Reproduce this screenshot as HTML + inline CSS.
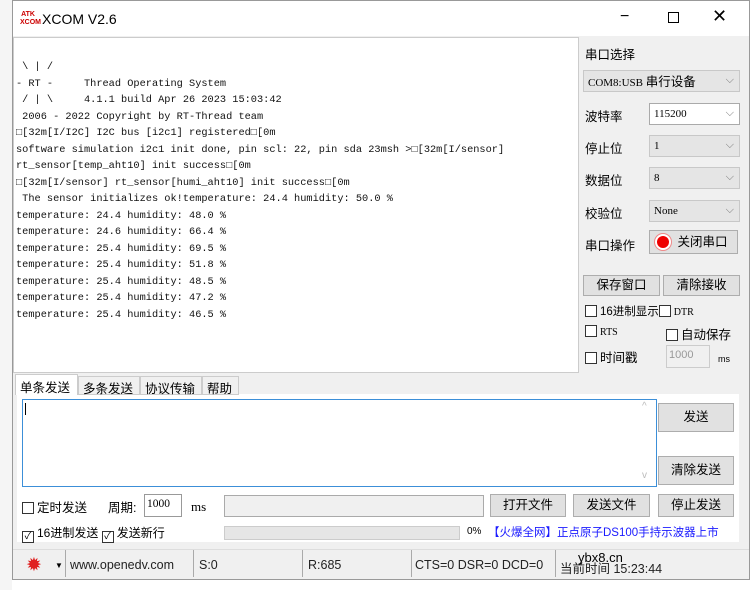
<!DOCTYPE html>
<html><head><meta charset="utf-8"><style>
*{margin:0;padding:0;box-sizing:border-box}
body{width:753px;height:590px;background:#fff;position:relative;overflow:hidden;font-family:"Liberation Sans","Noto Sans CJK SC",sans-serif;font-size:12px;color:#000}
.a{position:absolute}
.win{left:12px;top:0;width:738px;height:580px;background:#f0f0f0;border:1px solid #999}
.log{font-family:"Liberation Mono","Noto Sans CJK SC",monospace;font-size:10.3px;line-height:16.5px;white-space:pre;color:#111}
.cb{display:inline-block;width:12px;height:12px;border:1px solid #333;background:#fff;vertical-align:-2px;margin-right:3px}
.btn{position:absolute;background:#e1e1e1;border:1px solid #adadad;text-align:center;font-size:12.5px}
.combo{position:absolute;background:#e5e5e5;border:1px solid #c8c8c8;font-size:11px;padding-left:4px;line-height:20px;font-family:"Liberation Serif","Noto Sans CJK SC",serif}
.combo:after{content:"⌵";position:absolute;right:5px;top:-1px;color:#777;font-size:11px}
.lbl{position:absolute;font-size:12.5px}
</style></head><body>
<div class="a" style="left:0;top:0;width:12px;height:590px;background:#f5f5f5"></div>
<div class="a win"></div>
<div class="a" style="left:13px;top:1px;width:736px;height:35px;background:#fff"></div>
<div class="a" style="left:20px;top:11px;width:16px;height:16px;font-size:7px;line-height:8px;color:#c00;font-weight:bold;text-align:center">ATK<br>XCOM</div>
<div class="a" style="left:42px;top:11px;font-size:14px">XCOM V2.6</div>
<div class="a" style="left:620px;top:8px;font-size:16px">−</div>
<div class="a" style="left:668px;top:12px;width:11px;height:11px;border:1px solid #000"></div>
<div class="a" style="left:712px;top:6px;font-size:18px">✕</div>
<div class="a" style="left:13px;top:37px;width:566px;height:336px;background:#fff;border:1px solid #ccc"></div>
<div class="a log" style="left:16px;top:59px"> \ | /
- RT -     Thread Operating System
 / | \     4.1.1 build Apr 26 2023 15:03:42
 2006 - 2022 Copyright by RT-Thread team
□[32m[I/I2C] I2C bus [i2c1] registered□[0m
software simulation i2c1 init done, pin scl: 22, pin sda 23msh >□[32m[I/sensor]
rt_sensor[temp_aht10] init success□[0m
□[32m[I/sensor] rt_sensor[humi_aht10] init success□[0m
 The sensor initializes ok!temperature: 24.4 humidity: 50.0 %
temperature: 24.4 humidity: 48.0 %
temperature: 24.6 humidity: 66.4 %
temperature: 25.4 humidity: 69.5 %
temperature: 25.4 humidity: 51.8 %
temperature: 25.4 humidity: 48.5 %
temperature: 25.4 humidity: 47.2 %
temperature: 25.4 humidity: 46.5 %</div>
<div class="lbl" style="left:585px;top:44px">串口选择</div>
<div class="combo" style="left:583px;top:70px;width:157px;height:22px">COM8:USB <span style="font-family:'Noto Sans CJK SC';font-size:12.5px">串行设备</span></div>
<div class="lbl" style="left:585px;top:106px">波特率</div>
<div class="combo" style="left:649px;top:103px;width:91px;height:22px;background:#fff;border-color:#aaa">115200</div>
<div class="lbl" style="left:585px;top:138px">停止位</div>
<div class="combo" style="left:649px;top:135px;width:91px;height:22px">1</div>
<div class="lbl" style="left:585px;top:170px">数据位</div>
<div class="combo" style="left:649px;top:167px;width:91px;height:22px">8</div>
<div class="lbl" style="left:585px;top:203px">校验位</div>
<div class="combo" style="left:649px;top:200px;width:91px;height:22px">None</div>
<div class="lbl" style="left:585px;top:235px">串口操作</div>
<div class="btn" style="left:649px;top:230px;width:89px;height:24px;line-height:22px;padding-left:18px">关闭串口</div>
<div class="a" style="left:657px;top:236px;width:12px;height:12px;border-radius:50%;background:#e00;box-shadow:0 0 0 2px #fff,0 0 0 3px #e88"></div>
<div class="btn" style="left:583px;top:275px;width:77px;height:21px;line-height:19px">保存窗口</div>
<div class="btn" style="left:663px;top:275px;width:77px;height:21px;line-height:19px">清除接收</div>
<div class="lbl" style="left:585px;top:303px;font-size:11.5px"><span class="cb"></span>16进制显示<span class="cb"></span><span style="font-family:'Liberation Serif';font-size:10px">DTR</span></div>
<div class="lbl" style="left:585px;top:325px;font-size:10px;font-family:'Liberation Serif'"><span class="cb"></span>RTS</div>
<div class="lbl" style="left:666px;top:324px"><span class="cb"></span>自动保存</div>
<div class="lbl" style="left:585px;top:347px"><span class="cb"></span>时间戳</div>
<div class="a" style="left:666px;top:345px;width:44px;height:23px;background:#f0f0f0;border:1px solid #ccc;color:#999;font-size:11px;padding:3px 2px">1000</div>
<div class="a" style="left:718px;top:354px;font-size:9px">ms</div>
<div class="a" style="left:17px;top:394px;width:722px;height:148px;background:#fff"></div>
<div class="a" style="left:15px;top:374px;width:63px;height:21px;background:#fff;border:1px solid #ccc;border-bottom:none;padding:2px 4px;font-size:12.5px">单条发送</div>
<div class="a" style="left:78px;top:376px;width:62px;height:19px;border:1px solid #ccc;padding:1px 4px;font-size:12.5px;background:#f0f0f0">多条发送</div>
<div class="a" style="left:140px;top:376px;width:62px;height:19px;border:1px solid #ccc;padding:1px 4px;font-size:12.5px;background:#f0f0f0">协议传输</div>
<div class="a" style="left:202px;top:376px;width:37px;height:19px;border:1px solid #ccc;padding:1px 4px;font-size:12.5px;background:#f0f0f0">帮助</div>
<div class="a" style="left:22px;top:399px;width:635px;height:88px;background:#fff;border:1px solid #3c8fd8"></div>
<div class="a" style="left:25px;top:403px;width:1px;height:12px;background:#000"></div>
<div class="a" style="left:642px;top:401px;color:#bbb;font-size:10px">^</div>
<div class="a" style="left:642px;top:470px;color:#bbb;font-size:10px">v</div>
<div class="btn" style="left:658px;top:403px;width:76px;height:29px;line-height:27px">发送</div>
<div class="btn" style="left:658px;top:456px;width:76px;height:29px;line-height:27px">清除发送</div>
<div class="lbl" style="left:22px;top:497px"><span class="cb"></span>定时发送</div>
<div class="lbl" style="left:108px;top:497px">周期:</div>
<div class="a" style="left:144px;top:494px;width:38px;height:23px;background:#fff;border:1px solid #999;font-family:'Liberation Serif';font-size:11.5px;padding:3px 2px">1000</div>
<div class="a" style="left:191px;top:499px;font-family:'Liberation Serif';font-size:13px">ms</div>
<div class="a" style="left:224px;top:495px;width:260px;height:22px;background:#f0f0f0;border:1px solid #aaa"></div>
<div class="btn" style="left:490px;top:494px;width:76px;height:23px;line-height:21px">打开文件</div>
<div class="btn" style="left:573px;top:494px;width:77px;height:23px;line-height:21px">发送文件</div>
<div class="btn" style="left:658px;top:494px;width:76px;height:23px;line-height:21px">停止发送</div>
<div class="lbl" style="left:22px;top:524px;font-size:12px"><span class="cb" style="text-align:center;font-size:10px;line-height:10px">✓</span>16进制发送 <span class="cb" style="text-align:center;font-size:10px;line-height:10px">✓</span>发送新行</div>
<div class="a" style="left:224px;top:526px;width:236px;height:14px;background:#e6e6e6;border:1px solid #ccc"></div>
<div class="a" style="left:467px;top:526px;font-size:10px">0%</div>
<div class="a" style="left:488px;top:524px;font-size:11.5px;color:#1a1aff;white-space:nowrap">【火爆全网】正点原子DS100手持示波器上市</div>
<div class="a" style="left:13px;top:549px;width:736px;height:30px;background:#f0f0f0;border-top:1px solid #ddd"></div>
<div class="a" style="left:26px;top:554px;color:#e02020;font-size:19px">✹</div>
<div class="a" style="left:55px;top:561px;font-size:8px">▼</div>
<div class="a" style="left:65px;top:550px;width:1px;height:27px;background:#aaa"></div>
<div class="a" style="left:70px;top:558px;font-size:12.5px;color:#222">www.openedv.com</div>
<div class="a" style="left:193px;top:550px;width:1px;height:27px;background:#aaa"></div>
<div class="a" style="left:199px;top:558px;font-size:12.5px;color:#222">S:0</div>
<div class="a" style="left:302px;top:550px;width:1px;height:27px;background:#aaa"></div>
<div class="a" style="left:308px;top:558px;font-size:12.5px;color:#222">R:685</div>
<div class="a" style="left:411px;top:550px;width:1px;height:27px;background:#aaa"></div>
<div class="a" style="left:415px;top:558px;font-size:12.5px;color:#222">CTS=0 DSR=0 DCD=0</div>
<div class="a" style="left:555px;top:550px;width:1px;height:27px;background:#aaa"></div>
<div class="a" style="left:560px;top:558px;font-size:12.5px;color:#222">当前时间 15:23:44</div>
<div class="a" style="left:578px;top:550px;font-size:13px;color:#000">ybx8.cn</div>
</body></html>
